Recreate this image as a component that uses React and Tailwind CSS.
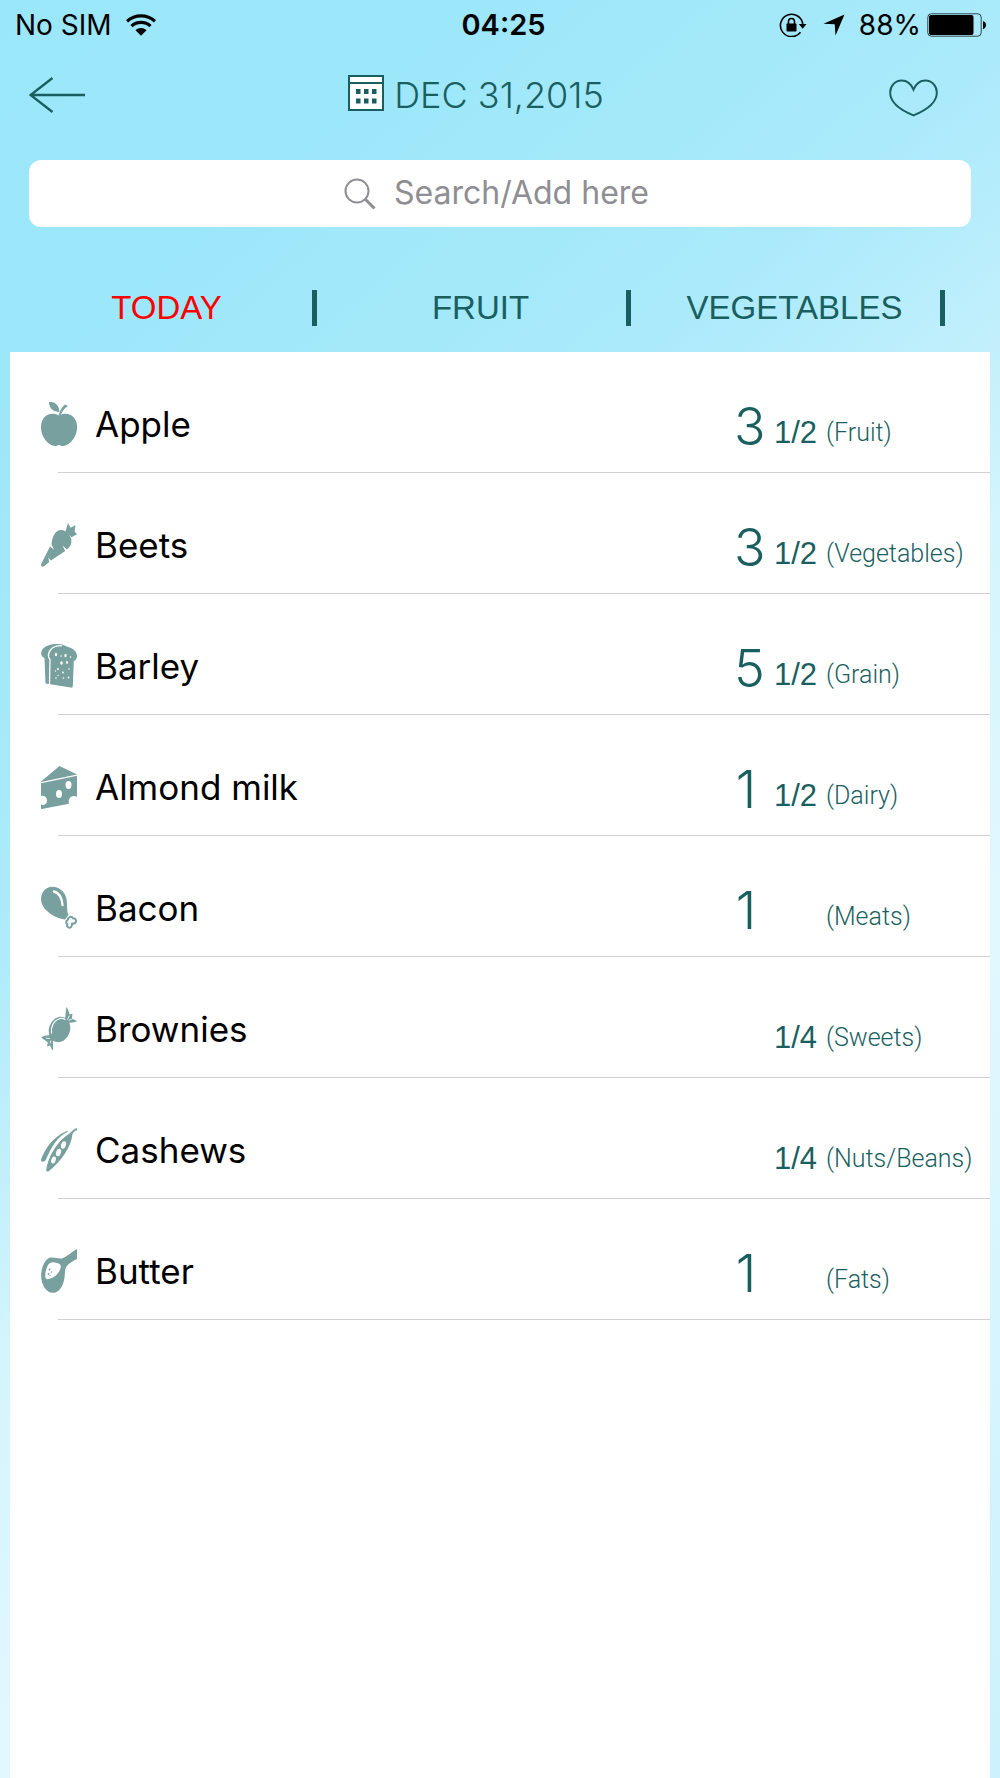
const INK = "#1a5f5f";

function AppleIcon() {
  return (
    <svg viewBox="0 0 36 44" className="h-11 w-9 shrink-0 fill-[#78a09f]" aria-hidden="true">
      <path d="M8 0c6-.4 10 3 10.500 10C12.500 10 8 6.500 8 0Z" />
      <path d="M17.500 13.500C19 8.500 21 5 24 2.500l3 1.600c-3.500 2-6 5.400-7.500 9.400Z" />
      <path d="M18 13.500c4-2.500 9.500-2.500 13 .3 4 3.200 5.500 8 5 13.200-.8 8-6 14.500-11.500 16.500-2.600.9-4.600.3-6.500-.8-1.900 1.100-3.900 1.700-6.500.8C6 41.500.8 35 .1 27-.4 21.800 1 17 5 13.800c3.500-2.800 9-2.800 13-.3Z" />
    </svg>
  );
}

function CarrotIcon() {
  return (
    <svg viewBox="0 0 36 44" className="h-11 w-9 shrink-0 fill-[#78a09f]" aria-hidden="true">
      <path d="M10.500 21.500C11 16 12.500 10.500 16.500 8c4-2.200 8-.3 11 3 3.500 4 4 9.500.5 13.500-.6.7-1.300 1.300-2 1.900l-4.600-4 2.800 5.700L10 37.500l-2.700-3 .9 4.500-4.800 4.100C1.500 44.500-.6 43.500.2 41L9 23.500l4.200 3.300Z" />
      <path d="M24.500 8.500 27 0l2.600 4.800L34.500 2 33.600 8.400 36 11.300l-5.500 2.900Z" />
    </svg>
  );
}

function BreadIcon() {
  return (
    <svg viewBox="0 0 36 44" className="h-11 w-9 shrink-0" aria-hidden="true">
      <path className="fill-[#78a09f]" d="M4.500 39.500 3.500 14C-.5 12.500-1 7 3 3.800 8-.3 16-.8 21 .6L31 4.500c3 1.500 5 4.500 5 7.500 0 2.500-1 4-3.200 5l-1 24.800c-.1 1.700-.6 2-2 1.800Z" />
      <path className="fill-none stroke-white" strokeWidth="1.300" d="M8.500 40 9 15.500C6 12.500 7.500 6.500 12 3.500 15 1.800 18 1.500 21 1.800" />
      <g className="fill-white">
        <ellipse cx="15" cy="10.500" rx="1.200" ry="1.700" />
        <ellipse cx="24.500" cy="11.500" rx="1.200" ry="1.800" />
        <circle cx="20" cy="12" r=".8" />
        <circle cx="29.500" cy="13" r=".8" />
        <ellipse cx="20.500" cy="19" rx="1.300" ry="1.800" />
        <ellipse cx="26" cy="18.500" rx="1" ry="1.400" />
        <circle cx="17" cy="25" r="1" />
        <circle cx="28" cy="25" r=".8" />
        <circle cx="14.500" cy="27" r=".7" />
        <circle cx="22" cy="28.500" r=".9" />
        <circle cx="17" cy="31.500" r=".7" />
        <circle cx="15" cy="34" r=".8" />
        <circle cx="22.500" cy="34" r=".8" />
        <circle cx="27.500" cy="33.500" r=".9" />
      </g>
    </svg>
  );
}

function CheeseIcon() {
  return (
    <svg viewBox="0 0 36 44" className="h-11 w-9 shrink-0" aria-hidden="true">
      <path className="fill-[#78a09f]" d="M0 16.500 18.500 1 36 9.500v22.300c-5-2.500-9.500 1.500-8 7L.8 44C.2 44 0 43.800 0 43Z" />
      <path className="fill-none stroke-white" strokeWidth="1.300" d="M0 17.600 36 10.200" />
      <g className="fill-white">
        <ellipse cx="27.500" cy="20" rx="3" ry="4" />
        <ellipse cx="18" cy="29" rx="3" ry="4" />
        <path d="M0 31c3-1 6 .8 6 4.500S3 40.800 0 39.500Z" />
      </g>
    </svg>
  );
}

function DrumstickIcon() {
  return (
    <svg viewBox="0 0 36 44" className="h-11 w-9 shrink-0" aria-hidden="true">
      <path className="fill-[#78a09f]" d="M2 6C6 0 14-.6 19.500 3.500c5.500 4.200 6.500 9 6.600 17 0 3.500.2 6 1.400 8.500L24 33.500c-4-.8-7.500-1.300-11-3.500C7 26.500 1.500 22 .3 15.500-.2 12 .2 9 2 6Z" />
      <path className="fill-none stroke-white" strokeWidth="2.400" strokeLinecap="round" d="M13 5.500c5 1.500 8 6.500 8.500 13.500" />
      <path className="fill-none stroke-[#78a09f]" strokeWidth="2" strokeLinejoin="round" d="M27.500 32c1.500-2 4-1.500 4.300.3 2.300-.2 3.700 1.500 3 3.500-.6 1.600-2.500 2-4 2 .3 2-.5 4-2.300 3.900-2.200 0-2.900-2-2.200-3.600-1.700-.8-1.300-3.300.3-4Z" />
    </svg>
  );
}

function CandyIcon() {
  return (
    <svg viewBox="0 0 36 44" className="h-11 w-9 shrink-0" aria-hidden="true">
      <g className="fill-[#78a09f]">
        <ellipse cx="18.500" cy="22.500" rx="10.500" ry="13" transform="rotate(18 18.500 22.500)" />
        <path d="M24 13 25.300 0c1.500 2 2.700 4.500 3.200 7.500l3-.7-.6 4.700L36 14c-2.500 1.500-5.500 2-8.500 1.500Z" />
        <path d="M12 31 12 43.500c-1.500-1.200-2.300-3-2.700-5L6 39.500l.7-4.300L0 30.500c3-1.800 6.500-2.500 10-2Z" />
      </g>
      <path className="fill-none stroke-white" strokeWidth="1.200" strokeLinecap="round" d="M10.500 26c-.8-6 2-12.500 8-14.300 2-.5 4-.3 5.500.8" />
      <path className="fill-none stroke-white" strokeWidth=".8" d="m26.500 12.500 2-4M27.500 13.300l4-1.300M10 33.500l-1 3M9 31.500l-4-.3" />
    </svg>
  );
}

function PeaPodIcon() {
  return (
    <svg viewBox="0 0 36 44" className="h-11 w-9 shrink-0" aria-hidden="true">
      <g className="fill-[#78a09f]">
        <path d="M0 31.500C4 21 12 8.500 25.500 3.300c1.500-.5 2 0 .8.700C15.500 9.500 10.500 19 5 31.500 3.500 34.500-.8 34.500 0 31.500Z" />
        <path d="M36 0v2.300c-2 .4-4 2-4.600 4.200C30.500 18 20 34 8 43c-1.800 1.200-3 .5-2.700-1.500C7 29 16 13 28.500 5.500 30.500 3.800 32.500.8 36 0Z" />
      </g>
      <g className="fill-white">
        <ellipse cx="22.500" cy="17" rx="2.400" ry="3.900" transform="rotate(18 22.500 17)" />
        <ellipse cx="17.500" cy="24.500" rx="2.400" ry="3.900" transform="rotate(18 17.500 24.500)" />
        <ellipse cx="12.500" cy="32" rx="2.200" ry="3.600" transform="rotate(18 12.500 32)" />
      </g>
    </svg>
  );
}

function SpoonIcon() {
  return (
    <svg viewBox="0 0 36 44" className="h-11 w-9 shrink-0" aria-hidden="true">
      <path className="fill-[#78a09f]" d="M36 0v10c-4 2-8.500 4.500-10.500 7.500-1.500 2.500-1.500 5-1.700 8C23.500 35 19 43.800 12 43.800 5 43.800-.5 34.500.2 25 .8 18 3.500 11.500 8 9c4-1.200 8.500.8 12.500.4C24.500 9 29 4 36 0Z" />
      <path className="fill-white" d="M6.500 17C8.500 13 12 12.800 16 14c3.500.9 4.500 2.500 3.300 6-1.700 5-6 8.500-11.500 10-2.500.5-3.500-.5-3.600-3C4.200 23.500 5 20 6.500 17Z" />
      <g className="fill-[#78a09f]">
        <circle cx="8.500" cy="20.500" r=".9" />
        <circle cx="10.500" cy="23" r=".8" />
        <circle cx="7.500" cy="25" r=".9" />
        <circle cx="9" cy="26.500" r=".6" />
      </g>
    </svg>
  );
}

const ITEMS = [
  { name: "Apple", Icon: AppleIcon, whole: "3", part: "1/2", group: "Fruit" },
  { name: "Beets", Icon: CarrotIcon, whole: "3", part: "1/2", group: "Vegetables" },
  { name: "Barley", Icon: BreadIcon, whole: "5", part: "1/2", group: "Grain" },
  { name: "Almond milk", Icon: CheeseIcon, whole: "1", part: "1/2", group: "Dairy" },
  { name: "Bacon", Icon: DrumstickIcon, whole: "1", part: "", group: "Meats" },
  { name: "Brownies", Icon: CandyIcon, whole: "", part: "1/4", group: "Sweets" },
  { name: "Cashews", Icon: PeaPodIcon, whole: "", part: "1/4", group: "Nuts/Beans" },
  { name: "Butter", Icon: SpoonIcon, whole: "1", part: "", group: "Fats" },
];

const TABS = ["TODAY", "FRUIT", "VEGETABLES"];

function StatusBar() {
  return (
    <div className="grid h-[50px] grid-cols-3 items-center pr-3.5 pl-[15px] text-[28px] leading-8 text-black">
      <div className="flex items-center gap-3.5">
        <span>No SIM</span>
        <svg viewBox="0 0 30 22" className="h-[22px] w-[30px]" aria-label="Wi-Fi" role="img">
          <g className="fill-none stroke-black" strokeWidth="3.200">
            <path d="M1 7.200C9 0 21 0 29 7.200" />
            <path d="M5.500 12.200c5.400-5 13.600-5 19 0" />
          </g>
          <path d="M9.500 16.200c3.200-2.800 7.800-2.800 11 0L15 21.800Z" />
        </svg>
      </div>
      <span className="pl-1.5 text-center text-[29px] font-semibold">04:25</span>
      <div className="flex items-center justify-end">
        <svg viewBox="0 0 28 24" className="mr-4 h-6 w-7" aria-label="Rotation lock" role="img">
          <path className="fill-none stroke-black" strokeWidth="1.600" d="M21.500 19.300A11.200 11.200 0 1 1 23.800 11.500" />
          <path d="M19.800 11h7.700l-3.800 4.800Z" />
          <rect x="7.500" y="10.500" width="10" height="8" rx=".8" />
          <path className="fill-none stroke-black" strokeWidth="1.600" d="M9.500 11V8.500a3 3 0 0 1 6 0V11" />
        </svg>
        <svg viewBox="0 0 22 22" className="mr-3.5 h-[22px] w-[22px]" aria-label="Location" role="img">
          <path d="M21.500.5 12.500 21.500l-.8-11.200L.5 9.700Z" />
        </svg>
        <span>88%</span>
        <svg viewBox="0 0 59 24" className="ml-1.5 h-6 w-[59px]" aria-label="Battery" role="img">
          <rect x=".8" y=".8" width="53.400" height="22.400" rx="3.500" className="fill-none stroke-black/70" strokeWidth="1" />
          <rect x="2" y="2" width="44.500" height="20" rx="2" />
          <path d="M56 8c4 1.200 4 7 0 8.200Z" />
        </svg>
      </div>
    </div>
  );
}

function Header() {
  return (
    <header className="grid h-[90px] grid-cols-[80px_1fr_80px] items-center px-6 text-[#1a5f5f]">
      <button type="button" aria-label="Back" className="justify-self-start pl-[5px]">
        <svg viewBox="0 0 56 36" className="h-9 w-14 fill-none" stroke={INK} strokeWidth="2.400" aria-hidden="true">
          <path d="M23.500 1 1.500 18l22 17M1.500 18H56" />
        </svg>
      </button>
      <button type="button" className="flex items-start gap-2.5 justify-self-center pr-12 text-[36px] leading-10 font-light">
        <svg viewBox="0 0 36 36" className="h-9 w-9" aria-hidden="true">
          <rect x="1" y="1" width="34" height="34" fill="#fff" stroke={INK} strokeWidth="2" />
          <path d="M1 8h34" stroke={INK} strokeWidth="2" />
          <path d="M8 14h4.500v5H8zM16 14h4.500v5H16zM24 14h4.500v5H24zM8 23.500h4.500v5H8zM16 23.500h4.500v5H16zM24 23.500h4.500v5H24z" fill={INK} />
        </svg>
        <span>DEC 31,2015</span>
      </button>
      <button type="button" aria-label="Favourite" className="justify-self-end pt-1.5 pr-[38px]">
        <svg viewBox="0 0 50 38" className="h-[38px] w-[49px] fill-none" stroke={INK} strokeWidth="2" aria-hidden="true">
          <path d="M25 10.500C22.500 4.500 18 1.200 13 1.200 6 1.200 1.200 7 1.200 13.500 1.200 24.500 13 32 25 36.800 37 32 48.800 24.500 48.800 13.500 48.800 7 44 1.200 37 1.200c-5 0-9.500 3.300-12 9.300Z" />
        </svg>
      </button>
    </header>
  );
}

export default function App() {
  return (
    <div className="flex min-h-screen flex-col bg-[linear-gradient(140deg,#9be7fa_0%,#9de7fa_15%,#a4e9fa_27%,#abeafb_34%,#b7edfc_40%,#c5f0fc_46%,#d4f5fd_52%,#d9f6fd_58%,#e1f8fe_67%,#d0f3fd_93%,#cef2fd_100%)] font-['Inter',sans-serif]">
      <StatusBar />
      <Header />
      <div className="px-[29px] pt-5">
        <label className="flex h-[67px] items-center justify-center gap-[18px] rounded-xl bg-white">
          <svg viewBox="0 0 32 32" className="h-8 w-8 fill-none stroke-[#8e8e93]" aria-hidden="true">
            <circle cx="13" cy="13" r="11.500" strokeWidth="2" />
            <path d="m21 21 9.500 9.500" strokeWidth="3" />
          </svg>
          <input
            type="text"
            aria-label="Search or add food"
            placeholder="Search/Add here"
            className="w-[262px] bg-transparent pb-0.5 text-[32px] leading-10 outline-none placeholder:text-[#8e8e93]"
          />
        </label>
      </div>
      <nav className="grid h-[125px] grid-cols-3 pt-[37px] pr-[49px] pl-[9px] font-['Liberation_Sans',sans-serif] text-[33px] leading-10">
        {TABS.map((tab, i) => (
          <div key={tab} className="flex h-[88px] items-center pr-1.5">
            <button type="button" className={i === 0 ? "flex-1 pl-3 text-[#ff0000]" : "flex-1 pl-3 text-[#1a5f5f]"}>
              {tab}
            </button>
            <span className="h-9 w-[5px] bg-[#1a5f5f]" />
          </div>
        ))}
      </nav>
      <ul className="mx-2.5 flex-1 bg-white">
        {ITEMS.map(({ name, Icon, whole, part, group }) => (
          <li key={name} className="flex h-[121px] flex-col">
            <div className="flex flex-1 items-center pt-6 pl-[31px]">
              <Icon />
              <span className="flex-1 pl-[18px] text-[35px] leading-10 text-black">{name}</span>
              <div className="mt-1.5 grid h-14 grid-cols-[40px_52px_164px] items-end text-[#1a5f5f]">
                <span className="pr-4 text-center text-[52px] leading-14 font-light">{whole}</span>
                <span className="font-['Liberation_Sans',sans-serif] text-[31px] leading-11">{part}</span>
                <span className="font-['Roboto',sans-serif] text-[25px] leading-11 font-light">({group})</span>
              </div>
            </div>
            <div className="ml-12 h-px bg-[#d0d0d0]" />
          </li>
        ))}
      </ul>
    </div>
  );
}
